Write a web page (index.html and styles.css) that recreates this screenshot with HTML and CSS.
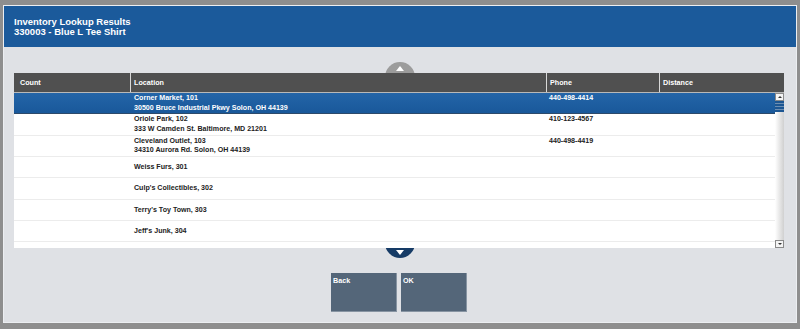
FILE: index.html
```html
<!DOCTYPE html>
<html lang="en">
<head>
    <meta charset="UTF-8">
    <title>Inventory Lookup Results</title>
    <link rel="stylesheet" href="styles.css">
</head>
<body>
    <div class="panel">
        <div class="header">
            <div class="title">Inventory Lookup Results</div>
            <div class="subtitle">330003 - Blue L Tee Shirt</div>
        </div>
        <div class="content">
            <div class="grid-wrap">
                <div class="arrow arrow-up"><span class="tri-up"></span></div>
                <div class="arrow arrow-down"><span class="tri-down"></span></div>
                <div class="grid">
                    <div class="grid-head">
                        <div class="col c-count">Count</div>
                        <div class="col c-loc">Location</div>
                        <div class="col c-phone">Phone</div>
                        <div class="col c-dist">Distance</div>
                    </div>
                    <div class="grid-body">
                        <div class="rows">
                            <div class="row selected">
                                <div class="col c-count"></div>
                                <div class="col c-loc"><div>Corner Market, 101</div><div>30500 Bruce Industrial Pkwy Solon, OH 44139</div></div>
                                <div class="col c-phone"><div>440-498-4414</div><div>&nbsp;</div></div>
                                <div class="col c-dist"></div>
                            </div>
                            <div class="row">
                                <div class="col c-count"></div>
                                <div class="col c-loc"><div>Oriole Park, 102</div><div>333 W Camden St. Baltimore, MD 21201</div></div>
                                <div class="col c-phone"><div>410-123-4567</div><div>&nbsp;</div></div>
                                <div class="col c-dist"></div>
                            </div>
                            <div class="row">
                                <div class="col c-count"></div>
                                <div class="col c-loc"><div>Cleveland Outlet, 103</div><div>34310 Aurora Rd. Solon, OH 44139</div></div>
                                <div class="col c-phone"><div>440-498-4419</div><div>&nbsp;</div></div>
                                <div class="col c-dist"></div>
                            </div>
                            <div class="row">
                                <div class="col c-count"></div>
                                <div class="col c-loc">Weiss Furs, 301</div>
                                <div class="col c-phone"></div>
                                <div class="col c-dist"></div>
                            </div>
                            <div class="row">
                                <div class="col c-count"></div>
                                <div class="col c-loc">Culp's Collectibles, 302</div>
                                <div class="col c-phone"></div>
                                <div class="col c-dist"></div>
                            </div>
                            <div class="row">
                                <div class="col c-count"></div>
                                <div class="col c-loc">Terry's Toy Town, 303</div>
                                <div class="col c-phone"></div>
                                <div class="col c-dist"></div>
                            </div>
                            <div class="row">
                                <div class="col c-count"></div>
                                <div class="col c-loc">Jeff's Junk, 304</div>
                                <div class="col c-phone"></div>
                                <div class="col c-dist"></div>
                            </div>
                            <div class="row">
                                <div class="col c-count"></div>
                                <div class="col c-loc">&nbsp;</div>
                                <div class="col c-phone"></div>
                                <div class="col c-dist"></div>
                            </div>
                        </div>
                        <div class="scrollbar">
                            <div class="sb-btn"><span class="sb-up"></span></div>
                            <div class="sb-thumb"></div>
                            <div class="sb-track"></div>
                            <div class="sb-btn"><span class="sb-down"></span></div>
                        </div>
                    </div>
                </div>
            </div>
            <div class="buttons">
                <button class="btn">Back</button>
                <button class="btn">OK</button>
            </div>
        </div>
    </div>
</body>
</html>
```
FILE: styles.css
```css
html, body {
    margin: 0;
    padding: 0;
}
body {
    width: 800px;
    height: 329px;
    background-color: #8e8e8e;
    font-family: "Liberation Sans", Arial, sans-serif;
    padding: 5px 3px 0 3px;
    box-sizing: border-box;
    overflow: hidden;
}
.panel {
    width: 794px;
    height: 318px;
    box-sizing: border-box;
    background-color: #dfe1e5;
    border: 1px solid #eceef1;
    display: flex;
    flex-direction: column;
}
.header {
    height: 41px;
    background-color: #1b5a9b;
    color: #fff;
    font-weight: bold;
    font-size: 9.5px;
    line-height: 10px;
    padding: 11px 0 0 10px;
    box-sizing: border-box;
}
.content {
    flex: 1;
    padding: 26px 13px 0 10px;
    display: flex;
    flex-direction: column;
}
.grid-wrap {
    position: relative;
}
.arrow {
    position: absolute;
    left: 371px;
    width: 30px;
    height: 30px;
    border-radius: 50%;
    display: flex;
    justify-content: center;
}
.arrow-up {
    top: -11px;
    background-color: #9c9c9c;
    align-items: flex-start;
    padding-top: 4px;
    box-sizing: border-box;
}
.arrow-down {
    bottom: -10px;
    background-color: #163b66;
    align-items: flex-end;
    padding-bottom: 3px;
    box-sizing: border-box;
}
.tri-up {
    width: 0;
    height: 0;
    border-left: 4px solid transparent;
    border-right: 4px solid transparent;
    border-bottom: 5px solid #fff;
}
.tri-down {
    width: 0;
    height: 0;
    border-left: 4px solid transparent;
    border-right: 4px solid transparent;
    border-top: 5px solid #fff;
}
.grid {
    position: relative;
    width: 770px;
    background-color: #fff;
}
.grid-head {
    display: flex;
    height: 19px;
    background-color: #505050;
    border-bottom: 1px solid #b9b9b9;
    color: #fff;
    font-weight: bold;
    font-size: 7.2px;
    line-height: 19px;
}
.grid-head .col {
    border-left: 1px solid #d8d8d8;
    padding-left: 3px;
}
.grid-head .c-count {
    border-left: none;
    padding-left: 6px;
}
.col {
    box-sizing: border-box;
}
.c-count { width: 116px; }
.c-loc { width: 416px; }
.c-phone { width: 113px; }
.c-dist { flex: 1; }
.grid-body {
    display: flex;
    height: 155px;
    overflow: hidden;
}
.rows {
    flex: 1;
}
.row {
    display: flex;
    align-items: center;
    height: 21.33px;
    box-sizing: border-box;
    border-bottom: 1px solid #ececec;
    color: #222;
    font-size: 7.1px;
    line-height: 9.5px;
    font-weight: bold;
    padding-top: 1px;
}
.row .col {
    padding-left: 4px;
}
.row .c-phone {
    padding-left: 3px;
}
.row.selected {
    background: linear-gradient(#2465a8, #19589a);
    border-bottom: 1px solid #2d4a6a;
    color: #fff;
}
.scrollbar {
    width: 9px;
    display: flex;
    flex-direction: column;
    background: linear-gradient(to right, #ffffff, #d0d0d0);
}
.sb-btn {
    height: 8px;
    background-color: #f4f4f4;
    border: 1px solid #8a8a8a;
    box-sizing: border-box;
    display: flex;
    align-items: center;
    justify-content: center;
}
.sb-up {
    width: 0;
    height: 0;
    border-left: 2px solid transparent;
    border-right: 2px solid transparent;
    border-bottom: 2px solid #333;
}
.sb-down {
    width: 0;
    height: 0;
    border-left: 2px solid transparent;
    border-right: 2px solid transparent;
    border-top: 2px solid #333;
}
.sb-thumb {
    height: 11px;
    background: repeating-linear-gradient(#1d5692 0, #1d5692 2px, #6d8eb2 2px, #6d8eb2 3px);
}
.sb-track {
    flex: 1;
}
.buttons {
    display: flex;
    justify-content: center;
    gap: 4px;
    margin-top: 25px;
    padding-left: 1px;
}
.btn {
    width: 66px;
    height: 39px;
    background-color: #546679;
    border: none;
    border-right: 1px solid #8794a2;
    border-bottom: 1px solid #8794a2;
    color: #fff;
    font-family: "Liberation Sans", Arial, sans-serif;
    font-weight: bold;
    font-size: 7.2px;
    text-align: left;
    padding: 3px 2px;
    display: flex;
    align-items: flex-start;
}
```
